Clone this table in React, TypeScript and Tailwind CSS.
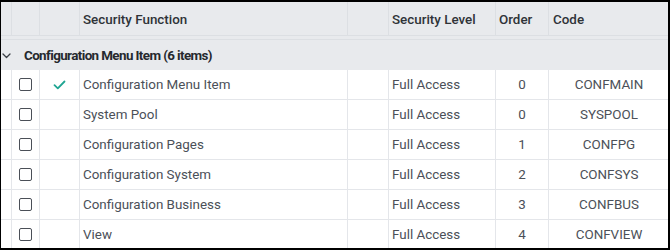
import React from "react";

const rows = [
  { name: "Configuration Menu Item", level: "Full Access", order: "0", code: "CONFMAIN", checked: true },
  { name: "System Pool", level: "Full Access", order: "0", code: "SYSPOOL", checked: false },
  { name: "Configuration Pages", level: "Full Access", order: "1", code: "CONFPG", checked: false },
  { name: "Configuration System", level: "Full Access", order: "2", code: "CONFSYS", checked: false },
  { name: "Configuration Business", level: "Full Access", order: "3", code: "CONFBUS", checked: false },
  { name: "View", level: "Full Access", order: "4", code: "CONFVIEW", checked: false },
];

const cols = "grid grid-cols-[11px_28px_40px_268px_41px_107px_53px_120px]";

function Box() {
  return <div className="w-[13px] h-[13px] rounded-[2px] border-[1.5px] border-[#4a4f57] bg-white" />;
}

function Check() {
  return (
    <svg width="13" height="10" viewBox="0 0 13 10" fill="none">
      <path d="M1.5 5.2 L4.8 8.3 L11.5 1.5" stroke="#1fa592" strokeWidth="1.8" strokeLinecap="round" strokeLinejoin="round" />
    </svg>
  );
}

export default function App() {
  return (
    <div
      className="w-[670px] h-[250px] overflow-hidden bg-white border-t-2 border-l border-r-2 border-b-2 border-black"
      style={{ fontFamily: "Roboto, 'Liberation Sans', sans-serif" }}
    >
      {/* header */}
      <div className={`${cols} h-[34px] bg-[#e8eaed] border-b border-[#dcdfe3] text-[13.4px] font-medium text-[#2f3338]`}>
        <div className="border-r border-[#dcdfe3]" />
        <div className="border-r border-[#dcdfe3]" />
        <div className="border-r border-[#dcdfe3]" />
        <div className="border-r border-[#dcdfe3] flex items-center pl-[3px] pt-[3px]">Security Function</div>
        <div className="border-r border-[#dcdfe3]" />
        <div className="border-r border-[#dcdfe3] flex items-center pl-[3px] pt-[3px]">Security Level</div>
        <div className="border-r border-[#dcdfe3] flex items-center pl-[3px] pt-[3px]">Order</div>
        <div className="flex items-center pl-[4px] pt-[3px]">Code</div>
      </div>
      {/* group row */}
      <div className="h-[3px] bg-[#e8eaed] border-b border-[#dcdfe3] box-content" />
      <div className="h-[30px] bg-[#e8eaed] flex items-center pt-[2px] text-[13.4px] font-bold tracking-[-0.6px] text-[#25292e]">
        <svg width="9" height="6" viewBox="0 0 9 6" fill="none" className="ml-[1px] mr-[13px]">
          <path d="M1 1 L4.5 4.5 L8 1" stroke="#3a3f45" strokeWidth="1.3" strokeLinecap="round" strokeLinejoin="round" />
        </svg>
        Configuration Menu Item (6 items)
      </div>
      {rows.map((r) => (
        <div key={r.code} className={`${cols} h-[30px] border-b border-[#e4e6ea] text-[13.4px] text-[#4b5058]`}>
          <div className="border-r border-[#e4e6ea]" />
          <div className="border-r border-[#e4e6ea] flex items-center justify-center pr-[1px]">
            <Box />
          </div>
          <div className="border-r border-[#e4e6ea] flex items-center justify-center">{r.checked ? <Check /> : null}</div>
          <div className="border-r border-[#e4e6ea] flex items-center pl-[3px] pt-[2px]">{r.name}</div>
          <div className="border-r border-[#e4e6ea]" />
          <div className="border-r border-[#e4e6ea] flex items-center pl-[3px] pt-[2px]">{r.level}</div>
          <div className="border-r border-[#e4e6ea] flex items-center justify-center pt-[2px]">{r.order}</div>
          <div className="flex items-center justify-center pt-[2px]">{r.code}</div>
        </div>
      ))}
    </div>
  );
}
